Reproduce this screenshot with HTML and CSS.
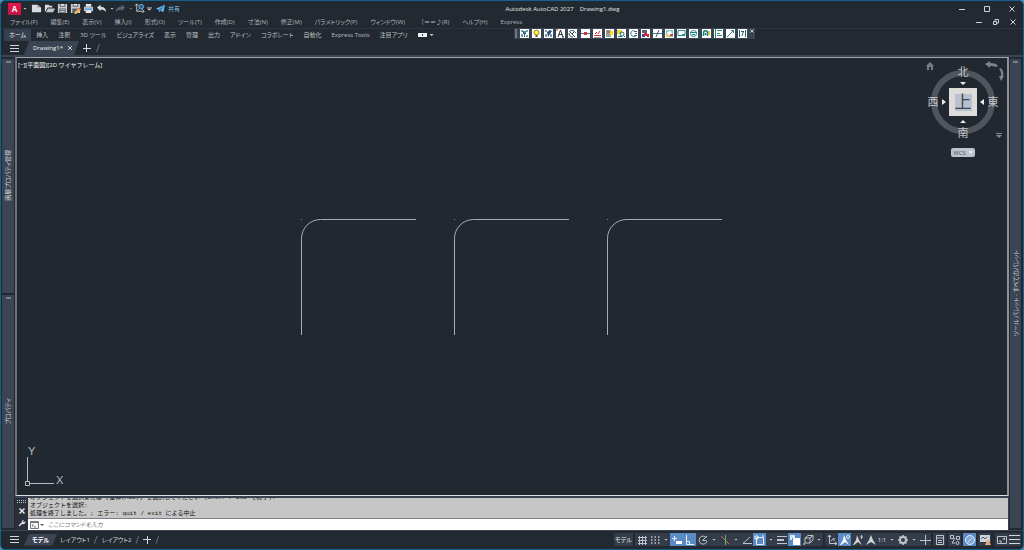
FILE: index.html
```html
<!DOCTYPE html>
<html lang="ja">
<head>
<meta charset="utf-8">
<title>Autodesk AutoCAD 2027</title>
<link rel="stylesheet" href="styles.css">
</head>
<body>
<div class="app">
  <header class="title-bar">
    <div class="quick-access">
      <button class="logo" type="button">A</button>
      <span class="caret"></span>
      <button class="qa" type="button" aria-label="新規"><svg viewBox="0 0 12 12"><path d="M1 2h6l4 3v5H1z" fill="#d9dcdf"/><path d="M7 2v3h4" fill="#8d949c"/></svg></button>
      <button class="qa" type="button" aria-label="開く"><svg viewBox="0 0 12 12"><path d="M1 10V2h4l1 1h3v2H4z" fill="#d9dcdf"/><path d="M4.500 6H12l-2 4H2z" fill="#c2c6ca"/></svg></button>
      <button class="qa" type="button" aria-label="上書き保存"><svg viewBox="0 0 12 12"><path d="M1 1h10v10H1z" fill="#c9cccf"/><path d="M3 1h6v3H3zM2.500 6h7v5h-7z" fill="#555d67"/><path d="M3.500 7h5v1h-5zM3.500 9h5v1h-5zM4 1h4v2H4z" fill="#e6e6e6"/></svg></button>
      <button class="qa" type="button" aria-label="名前を付けて保存"><svg viewBox="0 0 12 12"><path d="M1 1h10v10H1z" fill="#c9cccf"/><path d="M3 1h6v3H3zM2.500 6h6v5h-6z" fill="#555d67"/><path d="M4 1h4v2H4z" fill="#e6e6e6"/><path d="M5 10l5-5 2 2-5 5H5z" fill="#e8b45a"/><path d="M9 6l1-1 2 2-1 1z" fill="#e2574c"/></svg></button>
      <button class="qa" type="button" aria-label="印刷"><svg viewBox="0 0 12 12"><path d="M3 1h6v3H3z" fill="#e8eaec"/><path d="M1 4h10v5H1z" fill="#b9bfc6"/><path d="M2.500 6h7v2h-7z" fill="#5aa9e6"/><path d="M3 8h6v3H3z" fill="#e8eaec"/></svg></button>
      <button class="qa" type="button" aria-label="元に戻す"><svg viewBox="0 0 12 12"><path d="M1 5l4-3v2c4 0 6 2 6 6-1-2-3-3-6-3v2z" fill="#d9dcdf"/></svg></button>
      <span class="caret"></span>
      <button class="qa" type="button" aria-label="やり直し"><svg viewBox="0 0 12 12"><path d="M11 5L7 2v2C3 4 1 6 1 10c1-2 3-3 6-3v2z" fill="#5b636e"/></svg></button>
      <span class="caret caret-dim"></span>
      <button class="qa" type="button" aria-label="UCS"><svg viewBox="0 0 12 12" fill="none" stroke="#c5c9ce"><path d="M3 1v8h8M1 3l2-2 2 2M9 7l2 2-2 2"/><circle cx="8" cy="4" r="2.500" stroke="#6db4ea" fill="#34607f"/><path d="M3 9l3-3" stroke="#6db4ea"/></svg></button>
      <span class="caret caret-bar"></span>
      <button class="share" type="button"><svg viewBox="0 0 12 12"><path d="M0 6l12-5-2 10-4-2-2 2-.5-3z" fill="#5fb3ec"/><path d="M3.500 8L11 2 6 9" fill="#2d6f9c"/></svg>共有</button>
    </div>
    <h1 class="window-title"><span>Autodesk AutoCAD 2027</span><span>Drawing1.dwg</span></h1>
    <div class="window-buttons">
      <button type="button" aria-label="最小化"><svg viewBox="0 0 8 8"><path d="M1 4.500h6"/></svg></button>
      <button type="button" aria-label="最大化"><svg viewBox="0 0 8 8"><path d="M1.500 1.500h5v5h-5z"/></svg></button>
      <button type="button" aria-label="閉じる"><svg viewBox="0 0 8 8"><path d="M1.500 1.500l5 5M6.500 1.500l-5 5"/></svg></button>
    </div>
  </header>

  <nav class="menu-bar">
    <a href="#">ファイル(F)</a><a href="#">編集(E)</a><a href="#">表示(V)</a><a href="#">挿入(I)</a><a href="#">形式(O)</a><a href="#">ツール(T)</a><a href="#">作成(D)</a><a href="#">寸法(N)</a><a href="#">修正(M)</a><a href="#">パラメトリック(P)</a><a href="#">ウィンドウ(W)</a><a class="wide" href="#">（＝＝♪(R)</a><a href="#">ヘルプ(H)</a><a href="#">Express</a>
    <div class="doc-buttons">
      <button type="button" aria-label="最小化"><svg viewBox="0 0 8 8"><path d="M1 4.500h6"/></svg></button>
      <button type="button" aria-label="元のサイズ"><svg viewBox="0 0 8 8"><path d="M1.500 3.500h3v3h-3zM3 3V1.500h3.500V5H5"/></svg></button>
      <button type="button" aria-label="閉じる"><svg viewBox="0 0 8 8"><path d="M1.500 1.500l5 5M6.500 1.500l-5 5"/></svg></button>
    </div>
  </nav>

  <div class="ribbon">
    <nav class="ribbon-tabs">
      <a class="active" href="#">ホーム</a><a href="#">挿入</a><a href="#">注釈</a><a href="#">3D ツール</a><a href="#">ビジュアライズ</a><a href="#">表示</a><a href="#">管理</a><a href="#">出力</a><a href="#">アドイン</a><a href="#">コラボレート</a><a href="#">自動化</a><a href="#">Express Tools</a><a href="#">注目アプリ</a>
      <button class="ribbon-toggle" type="button" aria-label="リボン表示"><i></i><span class="caret"></span></button>
    </nav>
    <div class="express-bar">
      <span class="grip"></span>
      <button type="button" aria-label="画層オフ"><svg viewBox="0 0 9 9"><path d="M1 1h2v2H1zM6 1h2v2H6zM1 5h2v3H1zM6 6h2v2H6z" fill="#8b96a3"/><path d="M3 2h3v3H5v3H4V5H3z" fill="#175d96"/><path d="M4 2h2v2H4z" fill="#1ca0a0"/></svg></button>
      <button type="button" aria-label="画層オン"><svg viewBox="0 0 9 9"><circle cx="4.500" cy="3.500" r="2.500" fill="#fff04a" stroke="#98902b"/><path d="M3.500 6h2v2h-2z" fill="#595e35"/></svg></button>
      <button type="button" aria-label="画層分離"><svg viewBox="0 0 9 9"><path d="M1 1h2v2H1zM1 5h2v3H1zM6 5h2v3H6z" fill="#8b96a3"/><path d="M3 3l3-2 2 1-2 3-2 3z" fill="#1f4f86"/></svg></button>
      <button type="button" aria-label="文字"><svg viewBox="0 0 9 9" fill="none" stroke="#252a31"><path d="M2 8l2.500-7L7 8M3 5.500h3M6 8h2"/><path d="M0 1h2" stroke="#d22"/></svg></button>
      <button type="button" aria-label="円弧文字"><svg viewBox="0 0 9 9" fill="none" stroke="#3a4149"><path d="M1 3c2-2 4-2 6 0M2 3l5 5M1 4c0 3 2 4 4 4M6 3L4 5"/><path d="M5 1l3 3" stroke="#258f8f"/></svg></button>
      <button type="button" aria-label="破断線"><svg viewBox="0 0 9 9"><path d="M0 4h9v1H0z" fill="#50718b"/><path d="M3 3h3v3H3z" fill="#e03030"/></svg></button>
      <button type="button" aria-label="引出線"><svg viewBox="0 0 9 9" fill="none" stroke="#c92c35"><path d="M1 6.500h7M2 5l2-2M5 5l2-3"/><path d="M1 8.500h7" stroke="#999"/></svg></button>
      <button type="button" aria-label="ブロック"><svg viewBox="0 0 9 9"><path d="M1 1h5v7H1z" fill="#8bab9a"/><path d="M2 2h3v2H2z" fill="#d95a5a"/><path d="M5 2h3v4H5z" fill="#f2df3c"/></svg></button>
      <button type="button" aria-label="ワイプアウト"><svg viewBox="0 0 9 9"><path d="M0 1h5v4H0z" fill="#ead83b"/><circle cx="5" cy="5" r="2" fill="none" stroke="#1d7474"/><path d="M1 7.500h4M7 7l1 1" stroke="#1d7474"/></svg></button>
      <button type="button" aria-label="雲マーク"><svg viewBox="0 0 9 9" fill="none" stroke="#188b8b"><path d="M5 1.500a3 3 0 1 0 2 5"/><path d="M5 2.500h3M6 4.500h2M5 6.500h3" stroke="#555"/></svg></button>
      <button type="button" aria-label="置換"><svg viewBox="0 0 9 9"><path d="M1 1h5v3H1z" fill="#59626c"/><path d="M1 5h3v3H1z" fill="#254fb0"/><path d="M3 4h3v3H3zM6 5h2v3H6z" fill="#d92a32"/></svg></button>
      <button type="button" aria-label="交点"><svg viewBox="0 0 9 9" fill="none"><path d="M0 4.500h9" stroke="#3c7c9c"/><path d="M3 8l3-7" stroke="#555"/></svg></button>
      <button type="button" aria-label="塗り"><svg viewBox="0 0 9 9"><path d="M1 1h7v7H1z" fill="#7dc6c0"/><path d="M2 3l4-1 1 3-4 2z" fill="#fff"/><path d="M1 6h3v2H1z" fill="#ecd832"/><path d="M5 5h3v2H5z" fill="#db4242"/></svg></button>
      <button type="button" aria-label="矩形"><svg viewBox="0 0 9 9" fill="none" stroke="#2b8f8c"><path d="M1 1.500h7v5H1zM5 5.500h3"/></svg></button>
      <button type="button" aria-label="円形"><svg viewBox="0 0 9 9" fill="none" stroke="#1d8584"><circle cx="4.500" cy="4.500" r="3"/><path d="M1 3.500h7M3 5.500h3"/></svg></button>
      <button type="button" aria-label="円弧"><svg viewBox="0 0 9 9" fill="none" stroke="#178282"><path d="M1.500 7V4c0-3 4-3 4 0v3M3.500 6V4" stroke-width="1.500"/><path d="M7 2v4" stroke="#d8c72e" stroke-width="2"/></svg></button>
      <button type="button" aria-label="整列"><svg viewBox="0 0 9 9" fill="none" stroke="#2a8583"><path d="M1.500 0v9M3 1.500h5M3 4.500h3M3 6.500h5"/></svg></button>
      <button type="button" aria-label="寸法"><svg viewBox="0 0 9 9" fill="none" stroke="#2a8583"><path d="M1 8l7-7M5 1.500h2.500V4"/></svg></button>
      <button type="button" aria-label="検索"><svg viewBox="0 0 9 9" fill="none" stroke="#1f6464"><path d="M1.500 1v7M7.500 1v7M5.500 2L4 7M3 2.500h3"/></svg></button>
      <button class="bar-close" type="button" aria-label="閉じる"><svg viewBox="0 0 4 4"><path d="M.5.5l3 3M3.500.5l-3 3" stroke="#ccd0d5"/></svg></button>
    </div>
  </div>

  <div class="file-tabs">
    <button class="burger" type="button" aria-label="メニュー"></button>
    <div class="file-tab">Drawing1*<button type="button" aria-label="閉じる"><svg viewBox="0 0 8 8"><path d="M2 2l4 4M6 2L2 6"/></svg></button></div>
    <button class="plus" type="button" aria-label="新規図面"></button>
    <span class="slash"></span>
  </div>

  <main class="workspace">
    <aside class="dock">
      <section class="palette"><h2>画層プロパティ管理</h2></section>
      <section class="palette"><h2>プロパティ</h2></section>
    </aside>
    <div class="center">
      <section class="viewport">
        <p class="view-label">[−][平面図][2D ワイヤフレーム]</p>
        <svg class="drawing" fill="none" stroke="#a9adb1">
          <g id="bend"><path d="M284.500 277V180.500a19 19 0 0 1 19-19H399"/><path d="M284 161.500h1" stroke="#7a7e83"/></g>
          <use href="#bend" x="153"/><use href="#bend" x="306"/>
        </svg>
        <svg class="ucs" viewBox="0 0 44 44" fill="none" stroke="#b8bbbf">
          <path d="M4.500 12v24M7 38.500h24M2.500 36.500h4v4h-4z"/>
          <text x="5" y="10">Y</text><text x="33" y="39">X</text>
        </svg>
        <div class="view-cube">
          <svg viewBox="0 0 83 90">
            <circle cx="39" cy="44" r="29" fill="none" stroke="#50555d" stroke-width="6"/>
            <path d="M25 30h28v28H25z" fill="#dddcda"/><path d="M31 36h17v17H31z" fill="#b7c1cf"/>
            <path d="M36 24h6l-3 3zM36 65h6l-3-3zM18 41v6l4-3zM60 41v6l-4-3z" fill="#eceded"/>
            <path d="M2 8l4-4 4 4H9v4H7V9H5v3H3V8z" fill="#767b82"/>
            <path d="M61 6l5-3v2c4 0 7 1 8 3l-2 1c-2-1-4-1-6-1v2zM75 11l2-1c2 2 3 5 2 8h1l-3 5-2-5h2c0-3 0-5-2-7z" fill="#7d8288"/>
            <path d="M72 75h6v1h-6zM72 77h6l-3 3z" fill="#868a90"/>
            <text x="39" y="18">北</text><text x="39" y="79">南</text><text x="9" y="48">西</text><text x="69" y="48">東</text>
            <text class="face" x="39" y="50">上</text>
          </svg>
          <button class="wcs" type="button">WCS<span></span></button>
        </div>
      </section>
      <section class="command">
        <div class="command-side">
          <span class="dots"></span>
          <button type="button" aria-label="閉じる"><svg viewBox="0 0 8 8"><path d="M1.500 1.500l5 5M6.500 1.500l-5 5" stroke="#e2e4e6" stroke-width="1.500"/></svg></button>
          <button type="button" aria-label="カスタマイズ"><svg viewBox="0 0 8 8"><path d="M1 7l3-3" stroke="#e2e4e6" stroke-width="1.500"/><path d="M4 5C3 3 4 1 6 1L5 2.500 6 3.500 7.500 2C8 4 6 6 4 5z" fill="#e2e4e6"/></svg></button>
        </div>
        <div class="command-body">
          <div class="history">
            <p>オブジェクトを選択または [全体(ALL)] を選択してください (Enter / Esc で終了):</p>
            <p>オブジェクトを選択:</p>
            <p>処理を終了しました。; エラー: quit / exit による中止</p>
          </div>
          <label class="prompt">
            <svg viewBox="0 0 14 8"><path d="M.5.5h8v7h-8z" fill="#f4f4f4" stroke="#75797e"/><path d="M1 1.500h7" stroke="#75797e"/><path d="M2 3.500l1.500 1L2 5.500M4 6h2" fill="none" stroke="#75797e"/><path d="M10 3h4l-2 2z" fill="#555"/></svg>
            <input type="text" placeholder="ここにコマンドを入力" aria-label="コマンド">
          </label>
        </div>
      </section>
    </div>
    <aside class="dock dock-right">
      <section class="palette"><h2>ツール パレット - すべてのパレット</h2></section>
    </aside>
  </main>

  <footer class="status-bar">
    <button class="burger" type="button" aria-label="メニュー"></button>
    <nav class="layout-tabs">
      <a class="active" href="#">モデル</a><a href="#">レイアウト1</a><span class="slash"></span><a href="#">レイアウト2</a><span class="slash"></span>
      <button class="plus" type="button" aria-label="新規レイアウト"></button><span class="slash"></span>
    </nav>
    <div class="tools">
      <button class="word" type="button">モデル</button><i></i>
      <button type="button" aria-label="グリッド"><svg viewBox="0 0 12 12"><path d="M3.500 2v9M6.500 2v9M9.500 2v9M2 3.500h9M2 6.500h9M2 9.500h9"/></svg></button>
      <button type="button" aria-label="スナップ"><svg viewBox="0 0 12 12"><path d="M2 3h9M2 6h9M2 9h9" stroke-width="1.500" stroke-dasharray="1.500 2"/></svg></button><span class="caret"></span>
      <button class="on" type="button" aria-label="ダイナミック入力"><svg viewBox="0 0 12 12"><path d="M1 4.500h5M3.500 2v5"/><path d="M5 7h6v3H5z" fill="#fff" stroke="none"/></svg></button>
      <button class="on" type="button" aria-label="直交モード"><svg viewBox="0 0 12 12"><path d="M2.500 1v9.500H10M2.500 7.500h3v3"/></svg></button>
      <button type="button" aria-label="極トラッキング"><svg viewBox="0 0 12 12"><path d="M9.500 4a4 4 0 1 0 .5 3M5.500 6.500h4M5.500 6.500L10 2"/></svg></button><span class="caret"></span>
      <button type="button" aria-label="アイソメ"><svg viewBox="0 0 12 12"><path d="M2 2l8 8" stroke="#d96464"/><path d="M6.500 1v10" stroke="#4fbe6f"/></svg></button><span class="caret"></span>
      <button type="button" aria-label="オブジェクトスナップトラッキング"><svg viewBox="0 0 12 12"><path d="M11 9.500H2L9 3"/></svg></button>
      <button class="on" type="button" aria-label="オブジェクトスナップ"><svg viewBox="0 0 12 12"><path d="M2.500 3.500h7v7h-7zM1 2h3v3H1zM8 2h2"/></svg></button><span class="caret"></span>
      <button type="button" aria-label="線の太さ"><svg viewBox="0 0 12 12"><path d="M1 2.500h10M1 9.500h10"/><path d="M1 6h7" stroke-width="2"/></svg></button>
      <button class="on" type="button" aria-label="選択の循環"><svg viewBox="0 0 12 12"><path d="M4 4h7v7H4z" fill="#fff" stroke="none"/><path d="M1 1h5v3H3v2H1z" fill="#dce8f5" stroke="none"/></svg></button>
      <button type="button" aria-label="3D オブジェクトスナップ"><svg viewBox="0 0 12 12"><path d="M3 4l3-2.500h5V6L8 9H3zM3 4h5v5M8 4l3-2.500"/><path d="M1 9h2v2H1z" fill="#c9855b" stroke="none"/></svg></button><span class="caret"></span><i></i>
      <button type="button" aria-label="ダイナミック UCS"><svg viewBox="0 0 12 12"><path d="M3.500 1v8.500H11M2 3l1.500-2L5 3M9 8l2 1.500L9 11M5 7l3-3v3"/></svg></button>
      <button class="on" type="button" aria-label="注釈オブジェクト"><svg viewBox="0 0 12 12"><path d="M5 1l2 5 3 5-4-3-4 3H1l3-5z" fill="#fff" stroke="none"/><circle cx="9" cy="3" r="1.500"/></svg></button>
      <button type="button" aria-label="注釈尺度の追加"><svg viewBox="0 0 12 12"><path d="M5 1l2 5 3 5-4-3-4 3H1l3-5z" fill="#cfd3d8" stroke="none"/><path d="M8 3h3M9.500 1v4"/></svg></button>
      <button type="button" aria-label="注釈尺度"><svg viewBox="0 0 12 12"><path d="M6 1l2 5 3 5-5-3-5 3 3-5z" fill="#cfd3d8" stroke="none"/></svg></button>
      <button class="scale" type="button">1:1</button><span class="caret"></span>
      <button type="button" aria-label="ワークスペース"><svg viewBox="0 0 12 12"><circle cx="6" cy="6" r="3" stroke-width="2"/><path d="M6 1v2M6 9v2M1 6h2M9 6h2M2.500 2.500l1 1M8.500 8.500l1 1M9.500 2.500l-1 1M2.500 9.500l1-1" stroke-width="1.500"/></svg></button><span class="caret"></span>
      <button type="button" aria-label="注釈モニター"><svg viewBox="0 0 12 12"><path d="M6.500 1v10M1 6.500h11"/></svg></button><i></i>
      <button type="button" aria-label="単位"><svg viewBox="0 0 12 12"><path d="M2.500 1.500h7v9h-7zM3 4h6M4 6.500h4M4 8.500h4"/></svg></button><i></i>
      <button type="button" aria-label="クイックプロパティ"><svg viewBox="0 0 12 12"><path d="M1.500 1.500h3v3h-3zM7.500 2.500h3v3h-3zM6 4L3 9h3"/><circle cx="8.500" cy="9" r="1.500"/></svg></button><i></i>
      <button class="on" type="button" aria-label="グラフィックスの性能"><svg viewBox="0 0 12 12"><circle cx="6" cy="6" r="4.500" fill="#7fa9d8"/><path d="M4 8l4-4" stroke="#cfe0f3"/></svg></button><i></i>
      <button type="button" aria-label="信頼"><svg viewBox="0 0 12 12"><path d="M1 1h10v7H1z" fill="#cfd3d8" stroke="none"/><path d="M2 5l2-2 2 2 2-2" stroke="#59616d"/><path d="M9 5l3 6H6z" fill="#eaa57a" stroke="none"/></svg></button><i></i><i></i>
      <button type="button" aria-label="フルスクリーン"><svg viewBox="0 0 12 12"><path d="M1.500 2.500h9v7h-9zM6.500 5.500l2-1.500v2M4 6v2h2"/></svg></button>
      <button class="burger" type="button" aria-label="カスタマイズ"></button>
    </div>
  </footer>
</div>
</body>
</html>
```
FILE: styles.css
```css
* { box-sizing: border-box; }
body {
  margin: 0;
  background: #4f8fae;
  color: #c9cdd2;
  font: 6px/8px "Open Sans", "Noto Sans CJK JP", sans-serif;
  font-feature-settings: "palt";
}
button, input {
  margin: 0;
  padding: 0;
  border: 0;
  background: none;
  color: inherit;
  font: inherit;
}
button { display: flex; align-items: center; justify-content: center; flex: none; }
a { color: inherit; text-decoration: none; white-space: nowrap; }
h1, h2, p { margin: 0; font-size: inherit; font-weight: inherit; }
svg { display: block; }

.app {
  display: flex;
  flex-direction: column;
  height: 100vh;
  border: 1px solid #14628c;
  border-radius: 5px;
  background: #222930;
  overflow: hidden;
}
.caret {
  flex: none;
  width: 9px;
  height: 2px;
  background: #d3d6da;
  clip-path: polygon(3px 0, 7px 0, 5px 2px);
}

/* Title bar */
.title-bar {
  display: grid;
  grid-template-columns: 5fr auto 4fr;
  align-items: center;
  height: 15px;
  flex: none;
}
.quick-access { display: flex; align-items: center; padding-left: 7px; }
.quick-access .caret { width: 7px; margin-left: -1px; }
.quick-access .logo + .caret { width: 10px; }
.logo {
  width: 13px;
  height: 12px;
  background: linear-gradient(#e5174f, #c3123f);
  color: #fff;
  font-size: 8px;
  font-weight: 700;
}
.qa { width: 13px; height: 12px; }
.qa svg { width: 11px; height: 11px; }
.caret-dim { opacity: .5; }
.caret-bar { height: 4px; clip-path: polygon(2px 0, 7px 0, 7px 1px, 2px 1px, 2px 2px, 7px 2px, 4px 4px, 2px 2px); }
.share { gap: 3px; color: #84bfe8; margin-left: 4px; }
.share svg { width: 9px; height: 9px; }
.window-title { display: flex; gap: 6px; color: #e2e4e6; }
.window-buttons, .doc-buttons { display: flex; justify-content: flex-end; }
.window-buttons { padding-right: 7px; gap: 17px; }
.doc-buttons { margin-left: auto; padding-right: 6px; gap: 9px; }
.window-buttons svg, .doc-buttons svg, .file-tab svg {
  width: 8px;
  height: 8px;
  fill: none;
  stroke: #cdd0d4;
}

/* Menu and ribbon */
.menu-bar {
  display: flex;
  align-items: center;
  flex: none;
  height: 12px;
  padding-left: 9px;
  gap: 13px;
  color: #b0b5bb;
}
.menu-bar .wide { font-feature-settings: normal; }
.ribbon {
  display: flex;
  flex: none;
  height: 13px;
  border-top: 1px solid #2d343f;
  position: relative;
}
.ribbon-tabs { display: flex; align-items: center; padding-left: 3px; gap: 10px; color: #bbc0c5; }
.ribbon-tabs .active { padding: 2px 5px; margin-right: -5px; background: #363f4e; color: #e4e6e8; }
.ribbon-toggle i { width: 9px; height: 4px; background: radial-gradient(circle, #333 1px, #f0f0f0 1px); }
.express-bar {
  position: absolute;
  left: 513px;
  top: -1px;
  display: flex;
  align-items: center;
  justify-content: space-between;
  width: 241px;
  height: 11px;
  padding: 0 1px;
  background: #3a4352;
}
.express-bar button { width: 9px; height: 9px; background: #fff; }
.express-bar button svg { width: 9px; height: 9px; }
.express-bar .grip { width: 2px; height: 9px; background: #6d7683; }
.express-bar .bar-close { width: 4px; align-self: flex-start; height: 6px; background: none; }
.express-bar .bar-close svg { width: 4px; height: 4px; }

/* Drawing tabs */
.file-tabs {
  display: flex;
  align-items: center;
  flex: none;
  height: 14px;
  padding-left: 9px;
}
.burger {
  width: 9px;
  height: 7px;
  background: linear-gradient(#d4d7da 1px, transparent 1px) 0 0 / 9px 3px;
}
.file-tab {
  display: flex;
  align-items: center;
  align-self: stretch;
  gap: 3px;
  margin-left: 5px;
  padding: 0 5px 0 9px;
  background: #3b4453;
  color: #f0f1f2;
  clip-path: polygon(5px 0, 100% 0, calc(100% - 5px) 100%, 0 100%);
}
.plus {
  width: 8px;
  height: 8px;
  background: linear-gradient(#d8dbde, #d8dbde) 50% 50% / 8px 1px no-repeat, linear-gradient(#d8dbde, #d8dbde) 50% 50% / 1px 8px no-repeat;
}
.file-tab + .plus { margin: 0 5px 0 4px; }
.slash { width: 4px; height: 8px; background: #69717c; clip-path: polygon(3px 0, 4px 0, 1px 100%, 0 100%); }

/* Workspace */
.workspace {
  display: flex;
  flex: 1;
  min-height: 0;
  padding-top: 2px;
  background: linear-gradient(#3b4453, #3b4453) 0 0 / 100% 2px no-repeat;
}
.dock {
  display: flex;
  flex-direction: column;
  flex: none;
  gap: 2px;
  width: 14px;
  padding: 2px 1px 2px;
}
.dock-right { padding-right: 2px; }
.palette {
  display: flex;
  align-items: center;
  justify-content: center;
  flex: 1;
  background: linear-gradient(#78808b, #78808b) 50% 2px / 5px 2px no-repeat, #3b4453;
}
.palette h2 {
  writing-mode: vertical-rl;
  text-orientation: sideways;
  transform: rotate(180deg);
  white-space: nowrap;
  color: #d0d4d8;
}
.center { display: flex; flex-direction: column; flex: 1; min-width: 0; }
.viewport {
  position: relative;
  flex: 1;
  border: solid;
  border-width: 1px 2px 1px 2px;
  border-color: #a3a5a8 #8e9093 #dfe0e2 #6f7276;
  background: #212830;
  overflow: hidden;
}
.view-label { padding: 3px 1px; color: #f2f3f4; font-feature-settings: normal; }
.drawing { position: absolute; inset: 0; width: 100%; height: 100%; }
.ucs { position: absolute; left: 6px; bottom: 6px; width: 44px; height: 44px; }
.ucs text { font: 11px "Liberation Sans", sans-serif; fill: #b8bbbf; stroke: none; }
.view-cube { position: absolute; right: 0; top: 0; width: 83px; }
.view-cube svg { width: 83px; height: 90px; }
.view-cube text { font-size: 11px; text-anchor: middle; fill: #c4c7ca; }
.view-cube .face { font-size: 17px; fill: #3c4652; }
.wcs {
  gap: 3px;
  width: 24px;
  height: 9px;
  margin: 0 auto 0 27px;
  border-radius: 2px;
  background: #bfc3cf;
  color: #4c525c;
}
.wcs span { width: 4px; height: 3px; background: #eee; clip-path: polygon(0 0, 100% 0, 50% 100%); }

/* Command window */
.command { display: flex; flex: none; padding-top: 2px; background: #3a4151; }
.command-side {
  display: flex;
  flex-direction: column;
  align-items: center;
  gap: 4px;
  width: 13px;
  padding-top: 2px;
  background: #2a303b;
}
.command-side svg { width: 8px; height: 8px; }
.dots { width: 9px; height: 3px; background: linear-gradient(#2a303b, #2a303b) 0 1px / 100% 1px no-repeat, repeating-linear-gradient(90deg, #c5c8cc 0 1px, transparent 1px 2px); }
.command-body { flex: 1; min-width: 0; margin-right: 1px; }
.history {
  display: flex;
  flex-direction: column;
  justify-content: flex-end;
  height: 20px;
  padding-left: 2px;
  overflow: hidden;
  background: #c6c6c6;
  color: #111;
  font-family: "Liberation Mono", "Noto Sans CJK JP", monospace;
  font-feature-settings: normal;
}
.history p { flex: none; white-space: pre; }
.prompt {
  display: flex;
  align-items: center;
  gap: 4px;
  height: 12px;
  padding-left: 2px;
  border-top: 1px solid #7d7f88;
  background: #fff;
}
.prompt svg { width: 14px; height: 8px; }
.prompt input { flex: 1; height: 10px; outline: 0; font-style: italic; color: #333; }
.prompt input::placeholder { color: #777; }

/* Status bar */
.status-bar {
  display: flex;
  align-items: center;
  flex: none;
  height: 19px;
  padding: 0 2px 1px 9px;
  border-top: 1px solid #3b4453;
}
.layout-tabs { display: flex; align-items: center; gap: 4px; padding-left: 5px; color: #d8dbde; }
.layout-tabs .active {
  padding: 2px 8px;
  margin-right: -1px;
  background: #3b4453;
  color: #fff;
  font-weight: 700;
  clip-path: polygon(5px 0, 100% 0, calc(100% - 5px) 100%, 0 100%);
}
.tools { display: flex; align-items: center; margin-left: auto; background: #343c49; }
.tools i { width: 2px; height: 13px; background: #222930; }
.tools button { width: 13px; height: 13px; }
.tools svg { width: 12px; height: 12px; fill: none; stroke: #bfc4ca; }
.tools .on { background: #5b8bc4; }
.tools .on svg { stroke: #e8f0fa; }
.tools .word { width: 19px; color: #f0f1f2; }
.tools .scale { width: 10px; color: #e4e6e8; }
.tools .burger { width: 11px; height: 9px; margin: 0 1px; background-size: 11px 4px; }
```
